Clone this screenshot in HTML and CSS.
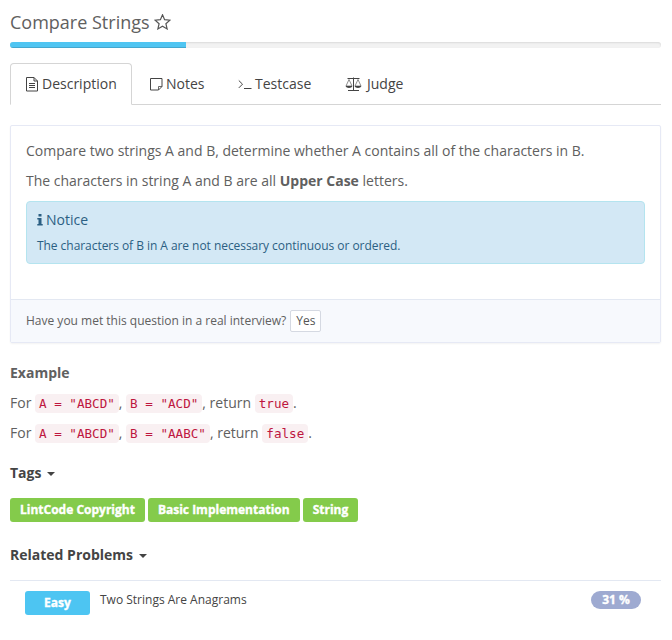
FILE: index.html
```html
<!DOCTYPE html>
<html lang="en">
<head>
<meta charset="utf-8">
<title>Compare Strings</title>
<link rel="stylesheet" href="styles.css">
</head>
<body>
<main class="page">
  <h1 class="title"><span>Compare Strings</span>
    <svg class="star" width="17" height="16" viewBox="0 0 17 16"><path d="M8.500 .8l2.100 4.900 5.300.5-4 3.500 1.200 5.200-4.600-2.700-4.600 2.700 1.200-5.200-4-3.500 5.300-.5z"/></svg>
  </h1>
  <div class="progress"><div class="bar"></div></div>
  <nav class="tabs">
    <a class="tab active">
      <svg class="icon" width="13" height="15" viewBox="0 0 13 15"><path d="M.5.5h7.500l3.500 3.500v10H.5zM8 .5v3.500h3.500M3 6.500h6M3 8.500h6M3 10.500h6"/></svg><span>Description</span></a>
    <a class="tab notes">
      <svg class="icon" width="13" height="13" viewBox="0 0 13 13"><path d="M.5.5h11.500v8l-3.500 3.500H.5z"/><path class="fold" d="M12 8.500H8.500V12"/></svg><span>Notes</span></a>
    <a class="tab testcase">
      <svg class="icon" width="14" height="11" viewBox="0 0 14 11"><path d="M.8 1.500l3.700 3.700L.8 8.900M6 9.500h7.500"/></svg><span>Testcase</span></a>
    <a class="tab judge">
      <svg class="icon" width="17" height="15" viewBox="0 0 17 15"><path d="M2.500 1.500h12M8.500.5v13M3 13.500h11"/><path class="thin" d="M4 2.500L1 9h6zM13 2.500L10 9h6z"/><path class="solid" d="M.5 9h7q-.8 2-3.500 2T.5 9zM9.500 9h7q-.8 2-3.500 2t-3.500-2z"/></svg><span>Judge</span></a>
  </nav>
  <section class="panel">
    <div class="panel-body">
      <p>Compare two strings A and B, determine whether A contains all of the characters in B.</p>
      <p>The characters in string A and B are all <b>Upper Case</b> letters.</p>
      <div class="alert">
        <h2><svg class="info" width="6" height="12" viewBox="0 0 6 12"><path d="M1.500 0h3v2.500h-3zM.3 4h4.200v6h1.200v1.500H.3V10h1.200V5.500H.3z"/></svg>Notice</h2>
        <div class="small">The characters of B in A are not necessary continuous or ordered.</div>
      </div>
    </div>
    <div class="panel-footer"><span>Have you met this question in a real interview?</span><button>Yes</button></div>
  </section>
  <h3 class="example">Example</h3>
  <p>For <code>A = "ABCD"</code>, <code>B = "ACD"</code>, return <code>true</code>.</p>
  <p>For <code>A = "ABCD"</code>, <code>B = "AABC"</code>, return <code>false</code>.</p>
  <h3 class="toggle">Tags<i class="caret"></i></h3>
  <div class="tags"><span class="label">LintCode Copyright</span><span class="label">Basic Implementation</span><span class="label">String</span></div>
  <h3 class="toggle related">Related Problems<i class="caret"></i></h3>
  <div class="problem"><span class="label easy">Easy</span><a>Two Strings Are Anagrams</a><span class="badge">31 %</span></div>
</main>
</body>
</html>
```
FILE: styles.css
```css
* { box-sizing: border-box; }
body { margin: 0; background: #fff; color: #606060; font: 14px/20px "Open Sans", sans-serif; }
.page { width: 651px; margin-left: 10px; padding-top: 10px; }
h1, h2, h3, p { margin: 0; font-size: 14px; }
.title { display: flex; align-items: center; gap: 4px; height: 24px; font-size: 18px; font-weight: 400; line-height: 24px; }
.star { fill: none; stroke: #555; stroke-width: 1.2; }
.progress { height: 6px; margin-top: 8px; overflow: hidden; border-radius: 3px; background: #f2f2f2; box-shadow: inset 0 1px 2px #0000001a; }
.bar { width: 176px; height: 6px; background: #4fc5f2; box-shadow: inset 0 -1px 0 #00000026; }
.tabs { display: flex; height: 42px; margin-top: 15px; border-bottom: 1px solid #d5d5d5; color: #444; }
.tab { display: flex; align-items: center; gap: 3px; height: 42px; padding: 0 15px; }
.tab.active { width: 122px; border: 1px solid #d5d5d5; border-bottom-color: #fff; border-radius: 4px 4px 0 0; background: #fff; }
.notes { width: 88px; padding-left: 18px; }
.testcase { width: 108px; padding-left: 18px; }
.judge { padding-left: 17px; gap: 5px; }
.icon { flex: none; fill: none; stroke: #444; stroke-width: 1; }
.thin { stroke-width: .6; }
.fold { stroke-width: .8; }
.solid { fill: #444; stroke: none; }
.panel { height: 218px; margin-top: 20px; border: 1px solid #e6e9f5; border-radius: 2px; box-shadow: 0 1px 2px #0000000d; }
.panel-body { height: 173px; padding: 15px 15px 0; }
p { height: 20px; margin-bottom: 10px; white-space: nowrap; }
.alert { height: 63px; padding: 8px 10px; border: 1px solid #b4e4ef; border-radius: 4px; background: #d3e8f5; color: #2b5f83; }
.alert h2 { display: flex; align-items: center; gap: 3px; font-weight: 400; line-height: 20px; }
.info { fill: #2b5f83; }
.small { margin-top: 6px; font-size: 12px; line-height: 20px; letter-spacing: -.05px; }
.panel-footer { display: flex; align-items: center; gap: 4px; height: 43px; padding-left: 15px; border-top: 1px solid #e3e8f2; background: #f7f9fd; font-size: 12px; }
button { width: 31px; height: 22px; padding: 0; border: 1px solid #d5d9e2; border-radius: 2px; background: #fff; color: #555; font: 12px/18px "Open Sans", sans-serif; }
.example { margin: 20px 0 10px; }
code { padding: 2px 4px; border-radius: 4px; background: #f9f0f2; color: #be173f; font: 12.6px/18px "DejaVu Sans Mono", monospace; }
.toggle { display: flex; align-items: center; gap: 6px; margin-top: 20px; height: 20px; color: #444; }
.caret { border: 4px solid transparent; border-top-color: #444; border-bottom: 0; margin-top: 2px; }
.tags { display: flex; gap: 3px; margin-top: 15px; }
.label, .badge { color: #fff; font-size: 12px; font-weight: 700; -webkit-text-stroke: .35px #fff; white-space: nowrap; }
.label { height: 24px; padding: 0 10px; border-radius: 3px; background: #84cb4b; line-height: 24px; }
.related { margin-top: 23px; }
.problem { display: flex; align-items: flex-start; height: 55px; margin-top: 15px; padding: 10px 20px 0 15px; border-top: 1px solid #e3e8f2; color: #444; font-size: 12px; line-height: 18px; }
.easy { width: 65px; margin-right: 10px; text-align: center; background: #4dc5f2; }
.badge { width: 50px; height: 18px; margin-left: auto; border-radius: 9px; background: #9eaad1; text-align: center; }
```
